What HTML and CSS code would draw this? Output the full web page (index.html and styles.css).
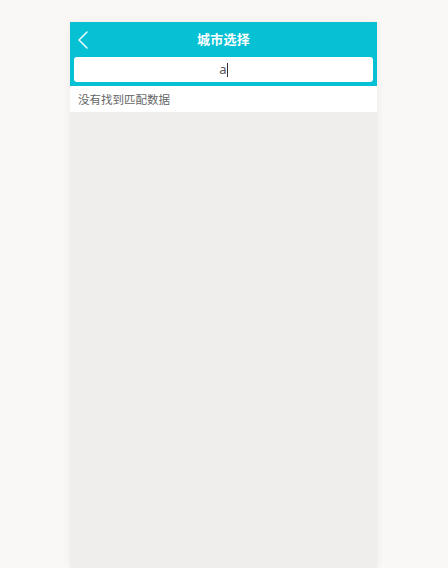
FILE: index.html
```html
<!DOCTYPE html>
<html lang="zh">
<head>
<meta charset="utf-8">
<title>城市选择</title>
<link rel="stylesheet" href="styles.css">
</head>
<body>
<div class="page">
  <div class="app">
    <div class="header">
      <div class="back">
        <svg width="12" height="18" viewBox="0 0 12 18"><path d="M10 1 L2 9 L10 17" fill="none" stroke="#fff" stroke-width="1.4" stroke-linecap="round" stroke-linejoin="round"/></svg>
      </div>
      <div class="title">城市选择</div>
    </div>
    <div class="search">
      <div class="input"><span class="value">a</span><span class="caret"></span></div>
    </div>
    <div class="empty">没有找到匹配数据</div>
  </div>
</div>
</body>
</html>
```
FILE: styles.css
```css
html, body {
  margin: 0;
  padding: 0;
  height: 100%;
  background: #f9f8f7;
  font-family: "Noto Sans CJK SC", "Noto Sans", sans-serif;
}
.page {
  padding-top: 22px;
  height: 100%;
  box-sizing: border-box;
}
.app {
  width: 307px;
  margin-left: 70px;
  height: 100%;
  background: #efeeec;
  box-shadow: 0 0 8px rgba(0, 0, 0, 0.06);
  display: flex;
  flex-direction: column;
}
.header {
  height: 35px;
  background: #06c1d4;
  display: flex;
  align-items: center;
  justify-content: center;
  position: relative;
}
.back {
  position: absolute;
  left: 7px;
  top: 9px;
  width: 12px;
  height: 18px;
}
.back svg { display: block; }
.title {
  color: #fff;
  font-size: 13px;
  font-weight: bold;
  letter-spacing: 0.3px;
  padding-bottom: 2px;
}
.search {
  background: #06c1d4;
  padding: 0 4px 4px;
}
.input {
  height: 25px;
  background: #fff;
  border-radius: 3px;
  display: flex;
  align-items: center;
  justify-content: center;
  font-size: 13px;
  color: #555;
  font-family: "Noto Sans", sans-serif;
}
.value { line-height: 1; }
.caret {
  width: 1px;
  height: 14px;
  background: #333;
  margin-left: 0;
}
.empty {
  height: 26px;
  background: #fff;
  padding-left: 8px;
  display: flex;
  align-items: center;
  font-size: 11.5px;
  color: #666;
}
```
